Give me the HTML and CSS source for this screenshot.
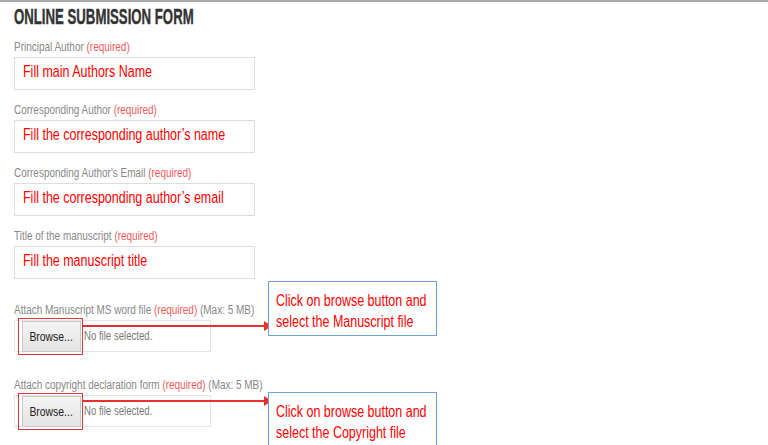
FILE: index.html
```html
<!DOCTYPE html>
<html lang="en">
<head>
    <meta charset="UTF-8">
    <title>Online Submission Form</title>
    <link rel="stylesheet" href="styles.css">
</head>
<body>
    <div class="page">
        <h1><span class="title-text">ONLINE SUBMISSION FORM</span></h1>

        <div class="field">
            <label><span class="cond">Principal Author <span class="req">(required)</span></span></label>
            <div class="text-box"><span class="cond">Fill main Authors Name</span></div>
        </div>

        <div class="field">
            <label><span class="cond">Corresponding Author <span class="req">(required)</span></span></label>
            <div class="text-box"><span class="cond">Fill the corresponding author&rsquo;s name</span></div>
        </div>

        <div class="field">
            <label><span class="cond">Corresponding Author's Email <span class="req">(required)</span></span></label>
            <div class="text-box"><span class="cond">Fill the corresponding author&rsquo;s email</span></div>
        </div>

        <div class="field">
            <label><span class="cond">Title of the manuscript <span class="req">(required)</span></span></label>
            <div class="text-box"><span class="cond">Fill the manuscript title</span></div>
        </div>

        <div class="field file-field">
            <label><span class="cond">Attach Manuscript MS word file <span class="req">(required)</span> (Max: 5 MB)</span></label>
            <div class="file-box">
                <span class="browse"><span class="cond">Browse...</span></span>
                <span class="no-file cond">No file selected.</span>
            </div>
            <!-- annotation -->
            <div class="mark"></div>
            <div class="arrow"></div>
            <div class="callout"><span class="cond">Click on browse button and<br>select the Manuscript file</span></div>
        </div>

        <div class="field file-field">
            <label><span class="cond">Attach copyright declaration form <span class="req">(required)</span> (Max: 5 MB)</span></label>
            <div class="file-box">
                <span class="browse"><span class="cond">Browse...</span></span>
                <span class="no-file cond">No file selected.</span>
            </div>
            <div class="mark"></div>
            <div class="arrow"></div>
            <div class="callout callout-low"><span class="cond">Click on browse button and<br>select the Copyright file</span></div>
        </div>
    </div>
</body>
</html>
```

FILE: styles.css
```css
body {
    margin: 0;
    height: 100vh;
    background-color: #fff;
    border-top: 2px solid #aaa;
    box-sizing: border-box;
    font-family: 'Liberation Sans', Arial, sans-serif;
    overflow: hidden;
}
.page {
    padding: 0 14px;
}
/* the page font is a narrow one, squeeze Arial to match */
.cond {
    display: inline-block;
    white-space: nowrap;
    transform: scaleX(0.8);
    transform-origin: left center;
}
h1 {
    margin: 2px 0 9px;
    font-size: 22px;
    line-height: 26px;
    color: #333;
    font-weight: bold;
}
.title-text {
    display: inline-block;
    white-space: nowrap;
    transform: scaleX(0.6);
    transform-origin: left center;
    -webkit-text-stroke: 0.4px #333;
}
.field {
    margin-bottom: 12px;
}
label {
    display: block;
    font-size: 12px;
    line-height: 16px;
    margin-bottom: 2px;
    color: #888;
}
label .cond {
    transform: scaleX(0.83);
}
.req {
    color: #f05a5a;
}
.text-box {
    width: 241px;
    height: 33px;
    box-sizing: border-box;
    border: 1px solid #ddd;
    padding: 4px 8px 0;
    font-size: 16px;
    line-height: 20px;
    color: #f00;
}
.text-box .cond {
    transform: scaleX(0.78);
}
.file-field {
    position: relative;
    margin-top: 23px;
}
.file-field + .file-field {
    margin-top: 25px;
}
.file-box {
    display: flex;
    align-items: center;
    width: 197px;
    height: 32px;
    box-sizing: border-box;
    border: 1px solid #e5e5e5;
    padding-left: 7px;
}
.browse {
    display: flex;
    align-items: center;
    justify-content: center;
    width: 59px;
    height: 31px;
    box-sizing: border-box;
    border: 1px solid #c8c8c8;
    background: linear-gradient(#f4f4f4, #e4e4e4);
    font-size: 13px;
    color: #222;
    margin-right: 3px;
}
.browse .cond {
    transform-origin: center;
}
.no-file {
    font-size: 12px;
    color: #777;
}
/* red annotation marks */
.mark {
    position: absolute;
    left: 4px;
    top: 16px;
    width: 65px;
    height: 37px;
    box-sizing: border-box;
    border: 1.5px solid #e8302e;
}
.arrow {
    position: absolute;
    left: 69px;
    top: 23px;
    width: 183px;
    height: 2px;
    background-color: #e8302e;
}
.arrow::after {
    content: '';
    position: absolute;
    right: -6px;
    top: -4px;
    border-left: 8px solid #e8302e;
    border-top: 5px solid transparent;
    border-bottom: 5px solid transparent;
}
.callout {
    position: absolute;
    left: 254px;
    top: -21px;
    width: 169px;
    height: 55px;
    box-sizing: border-box;
    border: 1.5px solid #6fa0d8;
    background-color: #fff;
    padding: 8px 7px 0;
    font-size: 16px;
    line-height: 21px;
    color: #f00;
}
.callout .cond {
    transform: scaleX(0.78);
}
.callout-low {
    top: 15px;
    height: 60px;
}
```
